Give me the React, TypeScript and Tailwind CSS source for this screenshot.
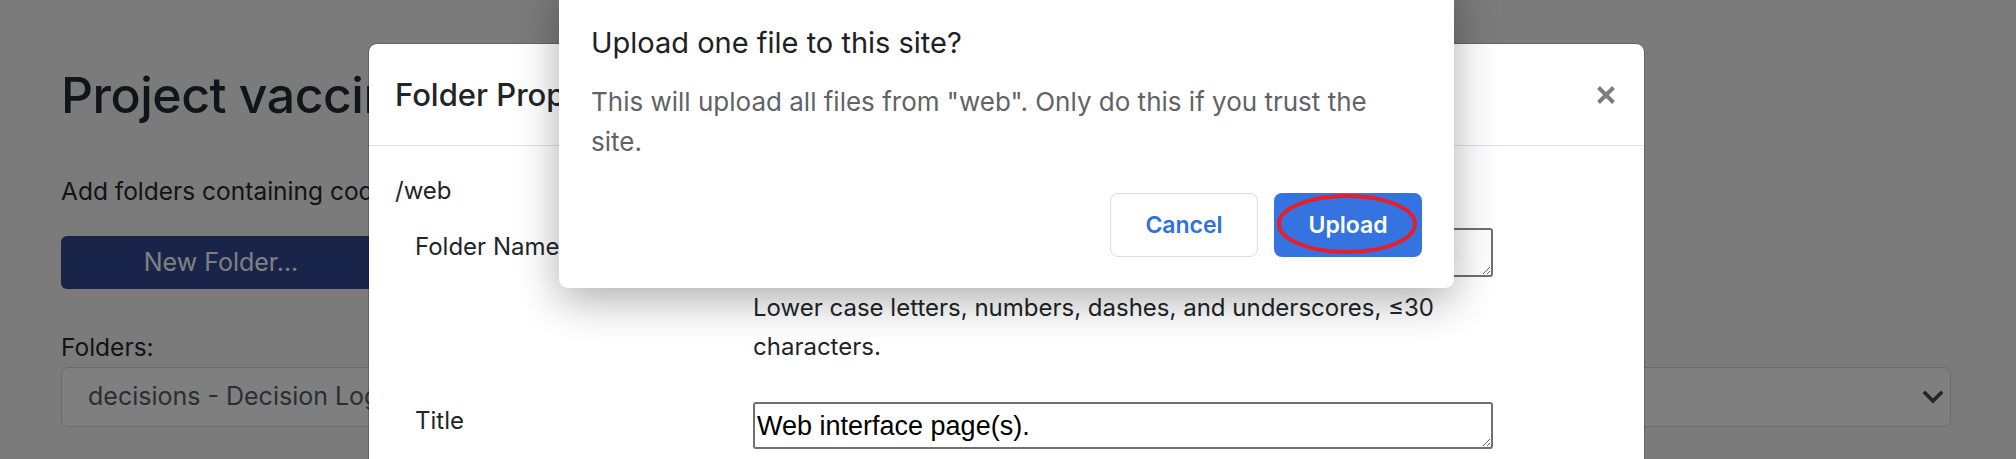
import React from "react";

const CloseIcon = () => (
  <svg width="20" height="20" viewBox="0 0 20 20" fill="none">
    <path d="M2.5 2.5 L17.5 17.5 M17.5 2.5 L2.5 17.5" stroke="#7d7d7d" strokeWidth="4" strokeLinecap="butt" />
  </svg>
);

const Chevron = () => (
  <svg width="20" height="14" viewBox="0 0 20 14" fill="none">
    <path d="M2 3 L10 11 L18 3" stroke="#4a4a4a" strokeWidth="3.6" strokeLinecap="square" />
  </svg>
);

const FolderModal = () => {
  return (
    <div className="absolute left-[368px] top-[43px] h-[520px] w-[1277px] rounded-[9px] border border-black/20 bg-white bg-clip-padding text-[#212529]">
      {/* header */}
      <div className="flex h-[102px] items-center justify-between border-b border-[#dee2e6] pl-[26px] pr-[28px]">
        <h5 className="text-[31px] font-medium leading-[38px]">Folder Properties</h5>
        <button className="flex h-[20px] w-[20px] items-center justify-center">
          <CloseIcon />
        </button>
      </div>

      {/* body */}
      <div className="flex flex-col pl-[26px] pt-[28px] text-[24px] leading-[34px]">
        <div>/web</div>

        <div className="mt-[20px] grid grid-cols-[338px_740px] pl-[20px]">
          <label className="mt-[2px]">Folder Name</label>
          <div className="flex flex-col">
            <textarea
              defaultValue="web"
              className="h-[49px] w-[740px] rounded-[3px] border-2 border-[#707070] pl-[2px] pt-[7px] font-['Liberation_Sans',Arial,sans-serif] text-[27px] leading-[31px] text-black outline-none"
            />
            <div className="mt-[11px] leading-[39px]">
              Lower case letters, numbers, dashes, and underscores, ≤30 characters.
            </div>
          </div>
        </div>

        <div className="mt-[36px] grid grid-cols-[338px_740px] pl-[20px]">
          <label className="mt-[2px]">Title</label>
          <textarea
            defaultValue="Web interface page(s)."
            className="h-[47px] w-[740px] rounded-[3px] border-2 border-[#707070] pl-[2px] pt-[7px] font-['Liberation_Sans',Arial,sans-serif] text-[27px] leading-[31px] text-black outline-none"
          />
        </div>
      </div>
    </div>
  );
};

const UploadDialog = () => {
  return (
    <div className="absolute left-[559px] top-[-20px] w-[895px] rounded-[9px] bg-white px-[32px] pb-[31px] pt-[46px] shadow-[0_12px_44px_rgba(0,0,0,0.32)]">
      <h2 className="text-[29px] leading-[34px] text-[#202124]">Upload one file to this site?</h2>
      <p className="mt-[22px] text-[26px] leading-[40px] text-[#5f6368]">
        This will upload all files from "web". Only do this if you trust the
        <br />
        site.
      </p>
      <div className="mt-[31px] flex justify-end gap-[16px]">
        <button className="h-[64px] w-[148px] rounded-[8px] border border-[#dadce0] bg-white text-[23px] font-semibold text-[#3070e0]">
          Cancel
        </button>
        <button className="relative h-[64px] w-[148px] rounded-[8px] bg-[#3574e0] text-[23px] font-semibold text-white">
          Upload
          {/* red annotation ring */}
          <svg className="absolute left-[-4px] top-[-4px]" width="156" height="72" viewBox="0 0 156 72" fill="none">
            <ellipse cx="77" cy="35" rx="68" ry="28" stroke="#e3202b" strokeWidth="4" />
          </svg>
        </button>
      </div>
    </div>
  );
};

export default function App() {
  return (
    <div className="relative h-[459px] w-[2016px] overflow-hidden bg-[#f6f6f6] font-['Inter','Liberation_Sans',sans-serif] text-[#26292e]">
      <main className="flex flex-col pl-[61px] pr-[65px] pt-[65px]">
        <h1 className="text-[50px] font-medium leading-[60px] tracking-[-0.5px]">Project vaccine-tracker</h1>
        <p className="mt-[49px] text-[24.5px] leading-[34px]">
          Add folders containing code and documents to this project.
        </p>
        <button className="mt-[28px] h-[53px] w-[320px] rounded-[6px] bg-[#304894] text-[25px] text-white">
          New Folder...
        </button>
        <label className="mt-[41px] text-[24.5px] leading-[34px]">Folders:</label>
        <div className="relative mt-[3px] h-[60px]">
          <select className="h-[60px] w-full appearance-none rounded-[7px] border border-[#d4d4d8] bg-white pl-[26px] text-[25px] text-[#585c62] outline-none">
            <option>decisions - Decision Log</option>
          </select>
          <span className="pointer-events-none absolute right-[8px] top-[23px]">
            <Chevron />
          </span>
        </div>
      </main>

      {/* modal backdrop */}
      <div className="absolute inset-0 bg-black/50" />

      <FolderModal />
      <UploadDialog />
    </div>
  );
}
